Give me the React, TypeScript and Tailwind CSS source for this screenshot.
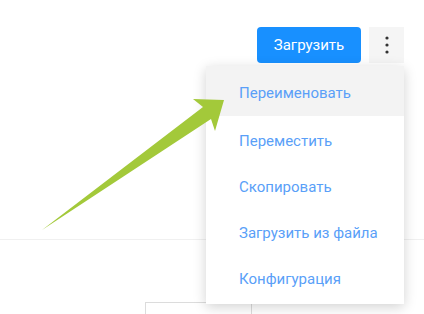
import React from "react";

const items = [
  "Переименовать",
  "Переместить",
  "Скопировать",
  "Загрузить из файла",
  "Конфигурация",
];

function Kebab() {
  return (
    <svg width="4" height="18" viewBox="0 0 4 18" fill="#333">
      <circle cx="2" cy="2" r="1.6" />
      <circle cx="2" cy="9" r="1.6" />
      <circle cx="2" cy="16" r="1.6" />
    </svg>
  );
}

export default function App() {
  return (
    <div
      className="relative w-[424px] h-[314px] overflow-hidden bg-white"
      style={{ fontFamily: "Roboto, 'Noto Sans', sans-serif" }}
    >
      <div className="flex justify-end items-center gap-2 pt-[27px] pr-5">
        <button className="h-9 w-[104px] rounded-sm bg-[#1890ff] text-white text-[15px]">
          Загрузить
        </button>
        <button className="h-9 w-[35px] flex items-center justify-center bg-[#f5f5f5]">
          <Kebab />
        </button>
      </div>

      <div className="mt-[176px] border-t border-[#f0f0f0]" />
      <div className="mt-[62px] ml-[145px] w-[107px] h-10 border border-[#dcdcdc]" />

      {/* dropdown menu */}
      <div className="absolute top-[66px] left-[206px] w-[198px] bg-white shadow-[0_3px_12px_rgba(0,0,0,0.18)] pb-1">
        {items.map((t, i) => (
          <div
            key={t}
            className={
              "flex items-center pl-[33px] pt-1 text-[15px] text-[#5a9ff8] " +
              (i === 0 ? "h-[50px] bg-[#f3f3f3]" : "h-[46px]")
            }
          >
            {t}
          </div>
        ))}
      </div>

      {/* annotation arrow */}
      <svg
        className="absolute left-0 top-0 pointer-events-none"
        width="424"
        height="314"
      >
        <polygon
          points="42,230 203,107 193,99 224,100 215,131 211,119"
          fill="#a3c93a"
        />
      </svg>
    </div>
  );
}
